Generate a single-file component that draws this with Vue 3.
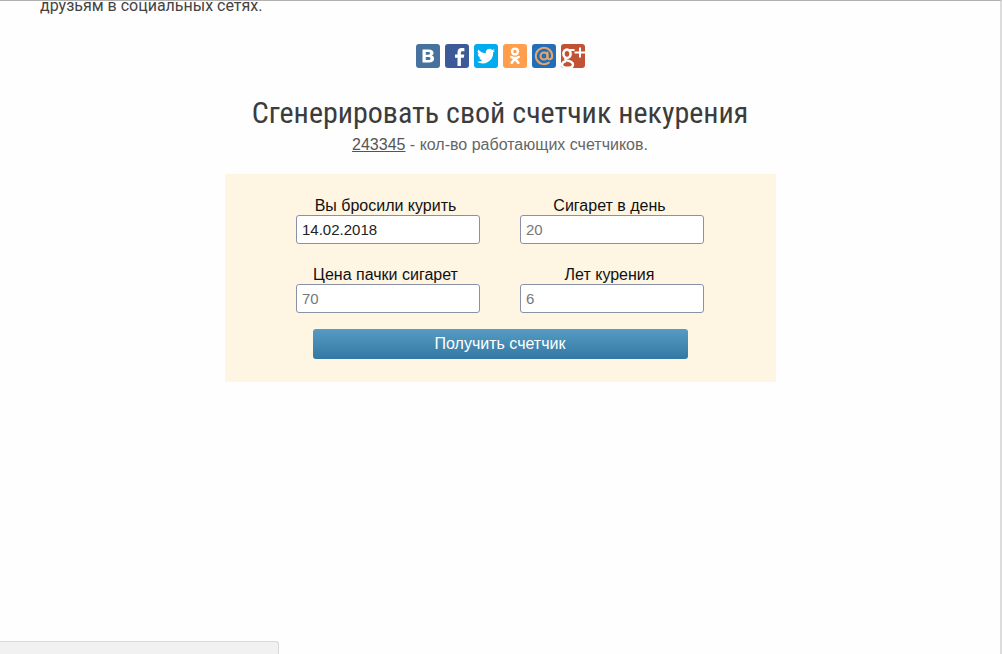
<template>
  <div class="page">
    <p class="intro">друзьям в социальных сетях.</p>

    <main class="content">
      <nav class="share" aria-label="Поделиться">
        <a class="share-link vk" href="#" aria-label="ВКонтакте">
          <svg viewBox="0 0 24 24">
            <path fill="#fff" fill-rule="evenodd" d="M6.500 5.500h6.300c3 0 4.700 1.300 4.700 3.400 0 1.400-.7 2.300-1.900 2.700 1.600.4 2.500 1.500 2.500 3.100 0 2.400-1.900 3.800-5 3.800H6.500zM9.800 7.900v2.800h2.300c1.300 0 2-.5 2-1.400s-.7-1.400-2-1.400zM9.800 13v3.100h2.600c1.400 0 2.100-.6 2.100-1.600s-.7-1.500-2.100-1.500z" />
          </svg>
        </a>
        <a class="share-link fb" href="#" aria-label="Facebook">
          <svg viewBox="0 0 24 24">
            <path fill="#fff" d="M12.500 22v-8.200H10v-3.300h2.500V8.300c0-2.800 1.600-4.300 4.200-4.300 1.100 0 2 .1 2.700.2v3h-1.900c-1.300 0-1.600.7-1.600 1.600v1.700h3.400l-.5 3.300h-2.900V22z" />
          </svg>
        </a>
        <a class="share-link tw" href="#" aria-label="Twitter">
          <svg viewBox="0 0 24 24">
            <path fill="#fff" d="M21 6.400a7.400 7.400 0 0 1-2.100.6 3.700 3.700 0 0 0 1.600-2 7.400 7.400 0 0 1-2.300.9 3.700 3.700 0 0 0-6.300 3.400A10.500 10.500 0 0 1 4.300 5.400a3.700 3.700 0 0 0 1.100 4.900 3.700 3.700 0 0 1-1.700-.5c0 1.800 1.300 3.300 3 3.700a3.700 3.700 0 0 1-1.700.1 3.700 3.700 0 0 0 3.500 2.500A7.400 7.400 0 0 1 3 17.700 10.500 10.500 0 0 0 19.200 8.300 7.500 7.500 0 0 0 21 6.400z" />
          </svg>
        </a>
        <a class="share-link ok" href="#" aria-label="Одноклассники">
          <svg viewBox="0 0 24 24" fill="none" stroke="#fff" stroke-linecap="round">
            <circle cx="12" cy="7.500" r="2.900" stroke-width="2.400" />
            <path stroke-width="2.600" d="M8.300 13c2.300 1.400 5.100 1.400 7.400 0M12 14.500l-3.300 4.200M12 14.500l3.300 4.200" />
          </svg>
        </a>
        <a class="share-link mail" href="#" aria-label="Мой Мир">
          <svg viewBox="0 0 24 24" fill="none" stroke="#e8a56a" stroke-width="2" stroke-linecap="round">
            <circle cx="12" cy="12" r="3.500" />
            <path d="M15.500 8.600V13c0 3.300 4.700 3 4.700-1a8.200 8.200 0 1 0-3.400 6.600" />
          </svg>
        </a>
        <a class="share-link gp" href="#" aria-label="Google+">
          <svg viewBox="0 0 24 24" fill="none" stroke="#fff">
            <ellipse cx="6" cy="9.800" rx="3.600" ry="4.200" stroke-width="2.600" />
            <path stroke-width="2" d="M8 6h5.500" />
            <path stroke-width="2.400" d="M5.500 13.800c-2 1.400-1.200 2.400 1 2.900 3 .7 5.500 1.400 5.500 3.800 0 2.200-2.400 3.300-5.500 3.300S1 22.800 1 20.700c0-1.900 1.700-3 4-3.600" />
            <path stroke-width="2" d="M13.500 8.500H24M19 3.500v10" />
          </svg>
        </a>
      </nav>

      <h1 class="title">Сгенерировать свой счетчик некурения</h1>
      <p class="total"><a href="#">243345</a> - кол-во работающих счетчиков.</p>

      <form class="counter-form" @submit.prevent>
        <div class="fields">
          <div v-for="field in fields" :key="field.id" class="field">
            <label :for="field.id">{{ field.label }}</label>
            <input
              :id="field.id"
              v-model="field.value"
              type="text"
              :placeholder="field.placeholder"
            >
          </div>
        </div>
        <button type="submit" class="submit">Получить счетчик</button>
      </form>
    </main>

    <div class="status-bar"></div>
  </div>
</template>

<script setup>
import { reactive } from 'vue'

const fields = reactive([
  { id: 'quit-date', label: 'Вы бросили курить', value: '14.02.2018', placeholder: '' },
  { id: 'per-day', label: 'Сигарет в день', value: '', placeholder: '20' },
  { id: 'pack-price', label: 'Цена пачки сигарет', value: '', placeholder: '70' },
  { id: 'years', label: 'Лет курения', value: '', placeholder: '6' },
])
</script>

<style>
body {
  margin: 0;
  background: #fefefe;
}
</style>

<style scoped>
.page {
  box-sizing: border-box;
  min-height: 100vh;
  border-top: 1px solid #b0b0b0;
  border-right: 2px solid #dcdcdc;
  font-family: "Liberation Sans", Arial, sans-serif;
  font-size: 16px;
  color: #111;
}

.intro {
  margin: 0;
  padding-left: 40px;
  font-family: Roboto, sans-serif;
  line-height: 10px;
  color: #444;
}

.content {
  display: flex;
  flex-direction: column;
  align-items: center;
  padding-top: 33px;
}

.share {
  display: flex;
  gap: 5px;
}

.share-link {
  width: 24px;
  height: 24px;
  border-radius: 3px;
  overflow: hidden;
}

.share-link svg {
  display: block;
  width: 100%;
  height: 100%;
}

.vk {
  background: #48729e;
}

.fb {
  background: #3c5a98;
}

.tw {
  background: #00aced;
}

.ok {
  background: #ff9f4d;
}

.mail {
  background: #226eb7;
}

.gp {
  background: #c25234;
}

.title {
  margin: 26px 0 0;
  font-family: "Roboto Condensed", "Liberation Sans Narrow", Roboto, sans-serif;
  font-size: 30px;
  font-weight: 400;
  line-height: 38px;
  color: #3c3c3c;
}

.total {
  margin: 3px 0 0;
  line-height: 20px;
  color: #666;
}

.total a {
  color: #555;
}

.counter-form {
  box-sizing: border-box;
  width: 100%;
  max-width: 551px;
  margin-top: 19px;
  padding: 23px 24px;
  display: flex;
  flex-direction: column;
  align-items: center;
  background: #fef5e3;
}

.fields {
  display: grid;
  grid-template-columns: repeat(2, 184px);
  gap: 22px 40px;
}

.field {
  display: flex;
  flex-direction: column;
}

.field label {
  padding-right: 5px;
  line-height: 18px;
  text-align: center;
}

.field input {
  box-sizing: border-box;
  width: 100%;
  height: 29px;
  padding: 0 5px;
  border: 1px solid #8891a5;
  border-radius: 3px;
  background: #fff;
  font: inherit;
  font-size: 15px;
  color: #222;
}

.field input::placeholder {
  color: #777;
  opacity: 1;
}

.submit {
  width: 375px;
  height: 30px;
  margin-top: 16px;
  padding: 0;
  border: 0;
  border-radius: 3px;
  background: linear-gradient(#559cc4, #3378a2);
  font: inherit;
  color: #fff;
}

.status-bar {
  position: fixed;
  left: 0;
  bottom: 0;
  box-sizing: border-box;
  width: 279px;
  height: 13px;
  border: 1px solid #d8d8d8;
  border-width: 1px 1px 0 0;
  border-top-right-radius: 3px;
  background: #f1f1f1;
}
</style>
